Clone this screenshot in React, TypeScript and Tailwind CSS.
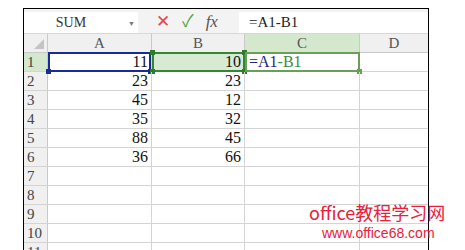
import React from 'react';

const cols = [
    { key: 'A', w: 'w-[104px]' },
    { key: 'B', w: 'w-[93px]' },
    { key: 'C', w: 'w-[115px]' },
    { key: 'D', w: 'w-[68px]' },
];

const data: Record<number, [string, string]> = {
    1: ['11', '10'],
    2: ['23', '23'],
    3: ['45', '12'],
    4: ['35', '32'],
    5: ['88', '45'],
    6: ['36', '66'],
};

const Handle: React.FC<{ className: string }> = ({ className }) => (
    <span className={`absolute w-[5px] h-[5px] ${className}`} />
);

const FormulaBar: React.FC = () => (
    <div className="flex h-[25px] bg-[#f3f3f3] border-b border-[#d8d8d8]">
        <div className="relative w-[114px] mt-[3px] bg-white flex items-center">
            <span className="w-[94px] text-center text-[14px] text-[#333]">SUM</span>
            <span className="absolute right-[3px] top-[7px] text-[7px] text-[#777]">▼</span>
        </div>
        <div className="w-[101px] flex items-center pl-[18px] gap-[12px]">
            <span className="text-[#e24a4a] text-[17px] leading-none">✕</span>
            <span className="text-[#4aa33a] text-[17px] leading-none">✓</span>
            <span className="italic text-[#555] text-[17px] leading-none">fx</span>
        </div>
        <div className="flex-1 mt-[3px] bg-white flex items-center pl-[10px] text-[15px] text-[#222]">
            =A1-B1
        </div>
    </div>
);

export default function App() {
    const rows = Array.from({ length: 11 }, (_, i) => i + 1);
    return (
        <div
            className="w-[465px] h-[250px] overflow-hidden bg-white pl-[23px] pt-[8px] relative"
            style={{ fontFamily: '"Liberation Serif", "Noto Sans CJK SC", serif' }}
        >
            <div className="w-[406px] border-l border-t border-r border-black">
                <FormulaBar />
                {/* column headers */}
                <div className="flex h-[19px] bg-[#f0f0f0] border-b border-[#c9c9c9]">
                    <div className="w-[24px] relative border-r border-[#c9c9c9]">
                        <span className="absolute right-[3px] bottom-[3px] w-0 h-0 border-l-[10px] border-l-transparent border-b-[10px] border-b-[#c4c4c4]" />
                    </div>
                    {cols.map((c) => (
                        <div
                            key={c.key}
                            className={`${c.w} flex items-center justify-center text-[15px] text-[#555] border-r border-[#c9c9c9] last:border-r-0 ${c.key === 'C' ? 'bg-[#d4e8ce]' : ''}`}
                        >
                            {c.key}
                        </div>
                    ))}
                </div>
                {rows.map((r) => (
                    <div key={r} className="flex h-[19px] border-b border-[#d4d4d4]">
                        <div
                            className={`w-[24px] flex items-center pl-[3px] text-[15px] text-[#444] border-r border-[#c9c9c9] ${r === 1 ? 'bg-[#d4e8ce]' : 'bg-[#f0f0f0]'}`}
                        >
                            {r}
                        </div>
                        <div className="w-[104px] relative flex items-center justify-end pr-[3px] text-[16px] text-[#111] border-r border-[#d4d4d4]">
                            {data[r]?.[0]}
                            {r === 1 && (
                                <>
                                    <span className="absolute left-[0px] right-[0px] -top-[1px] -bottom-[1px] border-2 border-[#1a2a9a]" />
                                    <Handle className="bg-[#1a2a9a] -left-[2px] -bottom-[3px]" />
                                    <Handle className="bg-[#1a2a9a] -right-[2px] -bottom-[3px]" />
                                </>
                            )}
                        </div>
                        <div
                            className={`w-[93px] relative flex items-center justify-end pr-[3px] text-[16px] text-[#111] border-r border-[#d4d4d4] ${r === 1 ? 'bg-[#d9ead3]' : ''}`}
                        >
                            {data[r]?.[1]}
                            {r === 1 && (
                                <>
                                    <span className="absolute left-[0px] right-[-1px] -top-[1px] -bottom-[1px] border-2 border-[#2f8a2f]" />
                                    <Handle className="bg-[#2f7a2f] -left-[2px] -top-[3px]" />
                                    <Handle className="bg-[#2f7a2f] -left-[2px] -bottom-[3px]" />
                                    <Handle className="bg-[#2f7a2f] -right-[3px] -top-[3px]" />
                                    <Handle className="bg-[#2f7a2f] -right-[3px] -bottom-[3px]" />
                                </>
                            )}
                        </div>
                        <div className="w-[115px] relative flex items-center pl-[4px] text-[16px] border-r border-[#d4d4d4]">
                            {r === 1 && (
                                <>
                                    <span>
                                        <span className="text-[#1f2a7a]">=A1</span>
                                        <span className="text-[#3f8a3a]">-B1</span>
                                    </span>
                                    <span className="absolute left-[0px] right-[-1px] -top-[1px] -bottom-[1px] border-2 border-[#6a9f5a]" />
                                    <Handle className="bg-[#6a9f5a] -right-[3px] -bottom-[3px]" />
                                </>
                            )}
                        </div>
                        <div className="w-[68px]" />
                    </div>
                ))}
            </div>
            <div
                className="absolute left-[309px] top-[203px] text-[18px] leading-none text-[#e8203a] whitespace-nowrap"
                style={{ fontFamily: '"Noto Sans CJK SC", "Noto Sans", sans-serif' }}
            >
                office教程学习网
            </div>
            <div
                className="absolute left-[322px] top-[226px] text-[14px] leading-none text-[#e8203a] whitespace-nowrap"
                style={{ fontFamily: '"Liberation Sans", sans-serif' }}
            >
                www.office68.com
            </div>
        </div>
    );
}
